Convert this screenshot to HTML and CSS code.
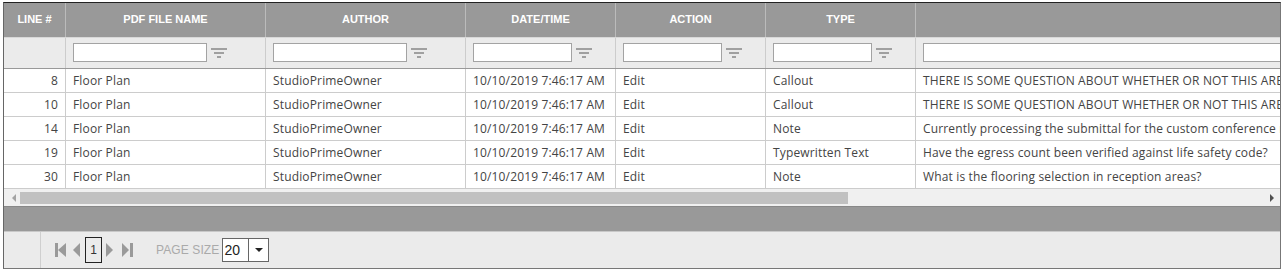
FILE: index.html
```html
<!DOCTYPE html>
<html>
<head>
    <title>Markups</title>
    <link rel="stylesheet" href="styles.css">
</head>
<body>
<div class="grid">
    <div class="clip">
        <div class="inner">
            <div class="row head">
                <div class="cell">LINE #</div>
                <div class="cell">PDF FILE NAME</div>
                <div class="cell">AUTHOR</div>
                <div class="cell">DATE/TIME</div>
                <div class="cell">ACTION</div>
                <div class="cell">TYPE</div>
                <div class="cell"></div>
            </div>
            <div class="row filter">
                <div class="cell"></div>
                <div class="cell"><input type="text"><span class="funnel"><i></i><i></i><i></i></span></div>
                <div class="cell"><input type="text"><span class="funnel"><i></i><i></i><i></i></span></div>
                <div class="cell"><input type="text" class="short"><span class="funnel"><i></i><i></i><i></i></span></div>
                <div class="cell"><input type="text" class="short"><span class="funnel"><i></i><i></i><i></i></span></div>
                <div class="cell"><input type="text" class="short"><span class="funnel"><i></i><i></i><i></i></span></div>
                <div class="cell"><input type="text" class="wide"></div>
            </div>
            <div class="row data">
                <div class="cell num">8</div><div class="cell">Floor Plan</div><div class="cell">StudioPrimeOwner</div>
                <div class="cell">10/10/2019 7:46:17 AM</div><div class="cell">Edit</div><div class="cell">Callout</div>
                <div class="cell">THERE IS SOME QUESTION ABOUT WHETHER OR NOT THIS AREA IS INCLUDED IN THE SCOPE OF WORK</div>
            </div>
            <div class="row data">
                <div class="cell num">10</div><div class="cell">Floor Plan</div><div class="cell">StudioPrimeOwner</div>
                <div class="cell">10/10/2019 7:46:17 AM</div><div class="cell">Edit</div><div class="cell">Callout</div>
                <div class="cell">THERE IS SOME QUESTION ABOUT WHETHER OR NOT THIS AREA IS INCLUDED IN THE SCOPE OF WORK</div>
            </div>
            <div class="row data">
                <div class="cell num">14</div><div class="cell">Floor Plan</div><div class="cell">StudioPrimeOwner</div>
                <div class="cell">10/10/2019 7:46:17 AM</div><div class="cell">Edit</div><div class="cell">Note</div>
                <div class="cell">Currently processing the submittal for the custom conference room millwork and finishes.</div>
            </div>
            <div class="row data">
                <div class="cell num">19</div><div class="cell">Floor Plan</div><div class="cell">StudioPrimeOwner</div>
                <div class="cell">10/10/2019 7:46:17 AM</div><div class="cell">Edit</div><div class="cell">Typewritten Text</div>
                <div class="cell">Have the egress count been verified against life safety code?</div>
            </div>
            <div class="row data">
                <div class="cell num">30</div><div class="cell">Floor Plan</div><div class="cell">StudioPrimeOwner</div>
                <div class="cell">10/10/2019 7:46:17 AM</div><div class="cell">Edit</div><div class="cell">Note</div>
                <div class="cell">What is the flooring selection in reception areas?</div>
            </div>
        </div>
    </div>
    <!-- fake horizontal scrollbar, native one looks different per browser -->
    <div class="hscroll">
        <span class="arr left"></span>
        <div class="track"><div class="thumb"></div></div>
        <span class="arr right"></span>
    </div>
    <div class="band"></div>
    <div class="pager">
        <div class="spacer"></div>
        <div class="nav">
            <span class="ico first"></span>
            <span class="ico prev"></span>
            <span class="page">1</span>
            <span class="ico next"></span>
            <span class="ico last"></span>
        </div>
        <span class="size-label">PAGE SIZE</span>
        <div class="size-box"><span class="val">20</span><span class="drop"></span></div>
    </div>
</div>
</body>
</html>
```

FILE: styles.css
```css
body {
    margin: 0;
    padding: 2px 3px 0 3px;
    font-family: "Open Sans", "Liberation Sans", sans-serif;
    background: #fff;
}
.grid {
    width: 1276px;
    border: 1px solid #777;
    border-top-color: #222;
    border-left-color: #666;
}
.clip { overflow: hidden; width: 1276px; }
.inner { width: 1916px; }

.row {
    display: grid;
    grid-template-columns: 62px 200px 200px 150px 150px 150px 1004px;
}
.cell {
    box-sizing: border-box;
    border-right: 1px solid #ccc;
    white-space: nowrap;
    overflow: hidden;
}

.head { background: #999; height: 34px; }
.head .cell {
    border-right-color: #bbb;
    color: #fff;
    font: bold 11px "Liberation Sans", Arial, sans-serif;
    display: flex; align-items: center; justify-content: center;
    padding-bottom: 3px;
}

.filter {
    background: #ebebeb;
    height: 32px;
    border-top: 1px solid #d8d8d8;
    border-bottom: 1px solid #999;
    box-sizing: border-box;
}
.filter .cell {
    display: flex; align-items: center;
    padding-left: 7px;
    gap: 4px;
}
.filter input {
    box-sizing: border-box;
    width: 134px; height: 19px;
    border: 1px solid #a3a3a3;
    background: #fff;
    margin: 0 0 2px 0; padding: 0;
}
.filter input.short { width: 99px; }
.filter input.wide { width: 990px; }
.funnel {
    display: flex; flex-direction: column; align-items: center;
    gap: 2px; width: 16px; margin-bottom: 1px;
}
.funnel i { display: block; height: 2px; background: #a0a0a0; }
.funnel i:nth-child(1) { width: 16px; }
.funnel i:nth-child(2) { width: 10px; }
.funnel i:nth-child(3) { width: 4px; }

.data {
    height: 24px;
    border-bottom: 1px solid #ccc;
    box-sizing: border-box;
    font-size: 12px;
    letter-spacing: 0.15px;
    color: #444;
}
.data .cell { display: flex; align-items: center; padding: 0 0 1px 7px; }
.data .cell.num { justify-content: flex-end; padding: 0 7px 1px 0; }

.hscroll {
    height: 17px;
    background: #f0f0f0;
    display: flex; align-items: center;
    border-bottom: 1px solid #888;
}
.hscroll .track { flex: 1; height: 12px; margin: 0 4px; }
.hscroll .thumb { width: 828px; height: 12px; background: #c1c1c1; }
.arr { width: 0; height: 0; border: 4px solid transparent; }
.arr.left { border-right-color: #a3a3a3; border-left-width: 0; margin-left: 8px; }
.arr.right { border-left-color: #505050; border-right-width: 0; margin-right: 6px; }

.band { height: 24px; background: #999; border-bottom: 1px solid #c8c8c8; }

.pager {
    height: 36px;
    background: #ebebeb;
    display: flex; align-items: center;
}
.spacer { width: 36px; align-self: stretch; border-right: 1px solid #cfcfcf; }
.nav { display: flex; align-items: center; margin-left: 14px; }
.ico { display: block; width: 0; height: 0; border: 7px solid transparent; position: relative; }
.ico.first { border-right: 8px solid #9a9a9a; border-left: 0; margin-left: 3px; margin-right: 7px; }
.ico.first::before {
    content: ""; position: absolute; left: -3px; top: -7px;
    width: 3px; height: 14px; background: #9a9a9a;
}
.ico.prev { border-right: 7px solid #9a9a9a; border-left: 0; margin-right: 5px; }
.page {
    box-sizing: border-box;
    width: 17px; height: 26px;
    border: 1px solid #222;
    font: 12px "Liberation Sans", Arial, sans-serif;
    color: #333;
    display: flex; align-items: center; justify-content: center;
    margin-right: 4px;
}
.ico.next { border-left: 7px solid #9a9a9a; border-right: 0; margin-right: 9px; }
.ico.last { border-left: 7px solid #9a9a9a; border-right: 0; }
.ico.last::after {
    content: ""; position: absolute; left: 1px; top: -7px;
    width: 3px; height: 14px; background: #9a9a9a;
}
.size-label {
    margin-left: 27px;
    font: 12px "Liberation Sans", Arial, sans-serif;
    letter-spacing: 0.1px;
    color: #aaa;
}
.size-box {
    margin-left: 3px;
    box-sizing: border-box;
    width: 47px; height: 24px;
    border: 1px solid #666;
    background: #fff;
    display: flex;
}
.size-box .val {
    width: 26px; border-right: 1px solid #666;
    font: 14px "Liberation Sans", Arial, sans-serif; color: #222;
    display: flex; align-items: center; padding-left: 1px; box-sizing: border-box;
}
.size-box .drop { flex: 1; display: flex; align-items: center; justify-content: center; }
.size-box .drop::after {
    content: ""; width: 0; height: 0;
    border: 4px solid transparent; border-top: 4px solid #222; border-bottom: 0;
}
```
